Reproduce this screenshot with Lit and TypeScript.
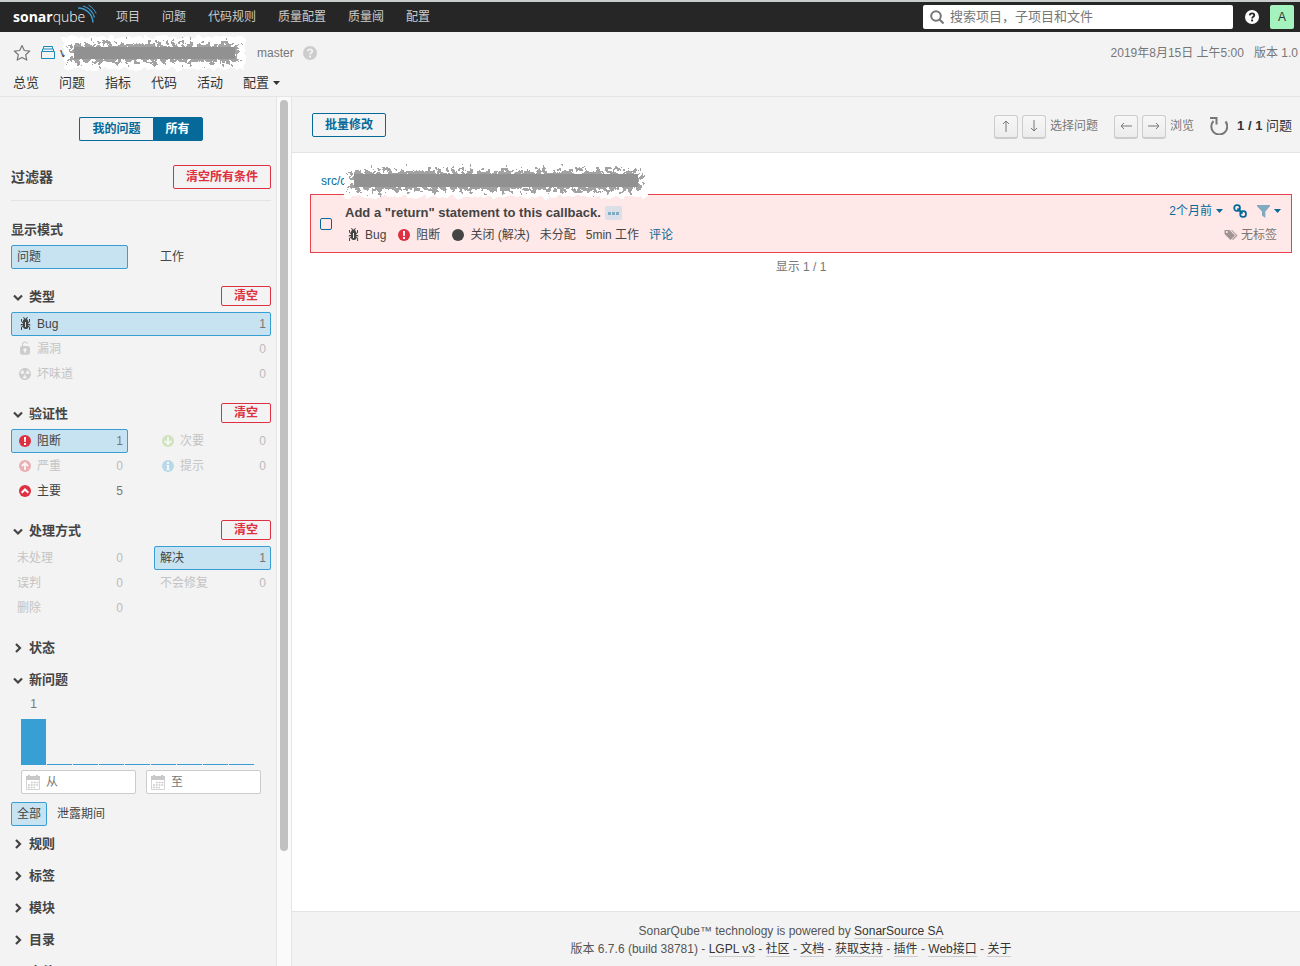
import { LitElement, html, svg, css, nothing, TemplateResult } from "lit";
import { customElement, property, state } from "lit/decorators.js";
import { classMap } from "lit/directives/class-map.js";
import { styleMap } from "lit/directives/style-map.js";

const shared = css`
  :host,
  :host * {
    box-sizing: border-box;
  }
  button,
  input {
    font: inherit;
    color: inherit;
    margin: 0;
  }
  button {
    border: 0;
    padding: 0;
    background: none;
    cursor: pointer;
  }
  a {
    color: inherit;
    text-decoration: none;
  }
  svg {
    display: block;
    flex: none;
  }
  .btn {
    height: 24px;
    padding: 0 12px;
    border: 1px solid #056a9a;
    border-radius: 2px;
    color: #056a9a;
    font-size: 12px;
    line-height: 22px;
    font-weight: 600;
    white-space: nowrap;
  }
  .btn.red {
    border-color: #de3040;
    color: #de3040;
  }
  .btn.small {
    height: 20px;
    line-height: 18px;
  }
`;

const icon16 = (body: TemplateResult, color = "#444") =>
  html`<svg width="16" height="16" viewBox="0 0 16 16" fill=${color} aria-hidden="true">${body}</svg>`;

const icons: Record<string, () => TemplateResult> = {
  bug: () =>
    icon16(svg`<path d="M11 9h1.3l.5.8.8-.5-.8-1.3H11v-.3l2-2.3V3h-1v2l-1 1.2V5c-.1-.8-.7-1.5-1.4-1.9L11 1.8l-.7-.7-1.8 1.6-1.8-1.6-.7.7 1.5 1.3C6.7 3.5 6.1 4.2 6 5v1.1L5 5V3H4v2.3l2 2.3V8H4.2l-.7 1.2.8.5.4-.7H6v.3l-2 1.9V14h1v-2.4l1-1C6 12 7.1 13 8.4 13h.8c.7 0 1.4-.3 1.8-.9.3-.4.3-.9.2-1.4l.9.9V14h1v-2.8l-2-1.9V9zm-2 2H8V6h1v5z"/>`),
  vulnerability: () =>
    icon16(svg`<path d="M10.8 5H6V3.9a2.28 2.28 0 0 1 2-2.5 2.22 2.22 0 0 1 1.8 1.2.48.48 0 0 0 .7.2.48.48 0 0 0 .2-.7A3 3 0 0 0 8 .4a3.34 3.34 0 0 0-3 3.5v1.2a2.16 2.16 0 0 0-2 2.1v4.4a2.22 2.22 0 0 0 2.2 2.2h5.6a2.22 2.22 0 0 0 2.2-2.2V7.2A2.22 2.22 0 0 0 10.8 5zm-2.2 5.5v1.2H7.4v-1.2a1.66 1.66 0 0 1-1.1-1.6A1.75 1.75 0 0 1 8 7.2a1.71 1.71 0 0 1 .6 3.3z"/>`),
  smell: () =>
    icon16(svg`<path d="M8 2C4.7 2 2 4.7 2 8s2.7 6 6 6 6-2.7 6-6-2.7-6-6-6zm-.5 5.5h.9v.9h-.9v-.9zm-3.8.2c-.1 0-.2-.1-.2-.2 0-.4.1-1.2.6-2S5.3 4.2 5.6 4c.2 0 .3 0 .3.1l1.3 2.3c0 .1 0 .2-.1.2-.1.2-.2.3-.3.5-.1.2-.2.4-.2.5 0 .1-.1.2-.2.2l-2.7-.1zM9.9 12c-.3.2-1.1.5-2 .5-.9 0-1.7-.3-2-.5-.1 0-.1-.2-.1-.3l1.3-2.3c0-.1.1-.1.2-.1.2.1.3.1.5.1s.4 0 .5-.1c.1 0 .2 0 .2.1l1.3 2.3c.2.2.2.3.1.3zm2.5-4.1L9.7 8c-.1 0-.2-.1-.2-.2 0-.2-.1-.4-.2-.5 0-.1-.2-.3-.3-.4-.1 0-.1-.1-.1-.2l1.3-2.3c.1-.1.2-.1.3-.1.3.2 1 .7 1.5 1.5s.6 1.6.6 2c0 0-.1.1-.2.1z"/>`),
  blocker: () =>
    icon16(svg`<circle cx="8" cy="8" r="6"/><path d="M7 4h2l-.2 5H7.2zM7 10h2v2H7z" fill="#fff"/>`, "#de3040"),
  critical: () =>
    icon16(svg`<circle cx="8" cy="8" r="6"/><path d="M8 12V5.2M4.8 8.2L8 5l3.2 3.2" fill="none" stroke="#fff" stroke-width="1.8"/>`, "#de3040"),
  major: () =>
    icon16(svg`<circle cx="8" cy="8" r="6"/><path d="M4.7 9.8L8 6.5l3.3 3.3" fill="none" stroke="#fff" stroke-width="2"/>`, "#de3040"),
  minor: () =>
    icon16(svg`<circle cx="8" cy="8" r="6"/><path d="M8 4v6.8M4.8 7.8L8 11l3.2-3.2" fill="none" stroke="#fff" stroke-width="1.8"/>`, "#8fc85a"),
  info: () =>
    icon16(svg`<circle cx="8" cy="8" r="6"/><path d="M7 4h2v2H7zM6.5 7H9v4h.7v1H6.4v-1H7V8h-.5z" fill="#fff"/>`, "#4cabd9"),
  closed: () => icon16(svg`<circle cx="8" cy="8" r="6"/>`),
  calendar: () => html`<svg width="14" height="15" viewBox="0 0 14 15" aria-hidden="true">
    <path d="M0 1h2V0h2v1h6V0h2v1h2v4H0z" fill="#c8c8c8" />
    <path d="M.5 5v9.5h13V5" fill="none" stroke="#d4d4d4" />
    <path d="M5 7.5h7.500M2 10h10.500M2 12.500h7" stroke="#c8c8c8" stroke-width="1.500" stroke-dasharray="1.800 1" />
  </svg>`,
};

const caret = (color: string) =>
  html`<svg width="7" height="4" viewBox="0 0 7 4" fill=${color} aria-hidden="true"><path d="M0 0h7L3.5 4z" /></svg>`;

const helpIcon = (size: number, fill: string, mark: string) =>
  html`<svg width=${size} height=${size} viewBox="0 0 14 14" aria-hidden="true">
    <circle cx="7" cy="7" r="7" fill=${fill} />
    <path d="M4.700 5.400C4.900 3.900 5.900 3.300 7 3.300c1.300 0 2.300.8 2.300 1.900C9.300 6.700 7.100 6.700 7.100 8.400" fill="none" stroke=${mark} stroke-width="1.800" />
    <path d="M6.100 9.500h2v1.900h-2z" fill=${mark} />
  </svg>`;

/* Spray-painted strip that hides a private name. */
@customElement("redaction-strip")
class RedactionStrip extends LitElement {
  @property({ type: Number }) width = 180;
  @property({ type: Number }) height = 36;

  static styles = css`
    :host {
      display: block;
    }
    svg {
      display: block;
      overflow: visible;
    }
  `;

  render() {
    const { width: w, height: h } = this;
    return html`<svg width=${w} height=${h} aria-hidden="true">
      <defs>
        <filter id="halo" x="-5%" y="-25%" width="110%" height="150%">
          <feTurbulence type="fractalNoise" baseFrequency=".15" numOctaves="2" seed="4" result="n" />
          <feDisplacementMap in="SourceGraphic" in2="n" scale="9" xChannelSelector="R" yChannelSelector="G" />
          <feGaussianBlur stdDeviation=".4" />
        </filter>
        <filter id="spray" x="-5%" y="-50%" width="110%" height="200%">
          <feTurbulence type="fractalNoise" baseFrequency=".22" numOctaves="3" seed="9" result="n" />
          <feDisplacementMap in="SourceGraphic" in2="n" scale="22" xChannelSelector="R" yChannelSelector="G" />
          <feGaussianBlur stdDeviation=".5" />
        </filter>
      </defs>
      <rect x="1" y="2" width=${w - 2} height=${h - 4} fill="#fff" filter="url(#halo)" />
      <rect x="9" y="9" width=${w - 17} height=${h - 18} fill="#a2a2a2" filter="url(#spray)" />
      <rect x="12" y="12" width=${w - 23} height=${h - 24} fill="#919191" />
    </svg>`;
  }
}

interface Item {
  label: string;
  count?: number;
  icon?: string;
  active?: boolean;
  off?: boolean;
}

@customElement("facet-box")
class FacetBox extends LitElement {
  @property() name = "";
  @property({ type: Boolean }) open = false;
  @property({ type: Boolean }) plain = false;
  @property({ type: Boolean }) clearable = false;
  @property({ type: Boolean }) tight = false;
  @property({ type: Number }) columns = 1;
  @property({ attribute: false }) items: Item[] = [];

  static styles = [
    shared,
    css`
      :host {
        display: block;
        padding-bottom: 12px;
      }
      :host([tight]) {
        padding-bottom: 7px;
      }
      .head {
        display: flex;
        align-items: center;
        justify-content: space-between;
        height: 20px;
      }
      .title {
        display: flex;
        align-items: center;
        gap: 4px;
        padding-top: 2px;
        font-size: 13px;
        line-height: 20px;
        font-weight: 600;
      }
      .list {
        display: grid;
        column-gap: 26px;
        row-gap: 1px;
        margin: 6px 0 5px;
      }
      .two {
        grid-template-columns: 1fr 1fr;
      }
      .item {
        display: flex;
        align-items: center;
        gap: 4px;
        height: 24px;
        padding: 0 4px 0 5px;
        border: 1px solid transparent;
        border-radius: 2px;
        font-size: 12px;
        line-height: 22px;
        text-align: left;
      }
      .item.active {
        background: #c7e2f0;
        border-color: #379fd3;
      }
      .item.off {
        color: #c4c4c4;
      }
      .off svg {
        opacity: 0.35;
      }
      .off svg[fill="#444"] {
        opacity: 0.22;
      }
      .count {
        margin-left: auto;
        color: #777;
      }
      .off .count {
        color: #bbb;
      }
    `,
  ];

  render() {
    const chevron = this.open ? "M3 5.500l4 4 4-4" : "M5 3l4 4-4 4";
    return html`
      <div class="head">
        ${this.plain
          ? html`<span class="title">${this.name}</span>`
          : html`<button class="title" aria-expanded=${this.open} @click=${() => (this.open = !this.open)}>
              <svg width="14" height="14" viewBox="0 0 14 14" aria-hidden="true">
                <path d=${chevron} fill="none" stroke="#444" stroke-width="2.200" />
              </svg>
              ${this.name}
            </button>`}
        ${this.clearable ? html`<button class="btn red small">清空</button>` : nothing}
      </div>
      ${this.open && this.items.length
        ? html`<div class=${classMap({ list: true, two: this.columns === 2 })}>
            ${this.items.map(
              (i) => html`<button class=${classMap({ item: true, active: !!i.active, off: !!i.off })}>
                ${i.icon ? icons[i.icon]() : nothing}
                <span>${i.label}</span>
                ${i.count !== undefined ? html`<span class="count">${i.count}</span>` : nothing}
              </button>`
            )}
          </div>`
        : nothing}
      ${this.open ? html`<slot></slot>` : nothing}
    `;
  }
}

const off = (label: string, icon?: string): Item => ({ label, icon, count: 0, off: true });

@customElement("app-root")
class AppRoot extends LitElement {
  @state() private mine = false;

  static styles = [
    shared,
    css`
      :host {
        display: flex;
        flex-direction: column;
        height: 100vh;
        background: #f3f3f3;
        color: #444;
        font: 12px/20px "Liberation Sans", "Noto Sans CJK SC", sans-serif;
      }
      .navbar {
        display: flex;
        align-items: center;
        height: 32px;
        flex: none;
        padding: 0 6px 0 13px;
        border-top: 2px solid #c9cdcd;
        background: #262626;
        color: #ccc;
      }
      .logo {
        position: relative;
        width: 103px;
        color: #fff;
        font: 300 14px/28px "Open Sans", sans-serif;
      }
      .logo b {
        font-weight: 700;
      }
      .logo svg {
        position: absolute;
        left: 64px;
        top: 1px;
      }
      .menu {
        display: flex;
        gap: 22px;
        flex: 1;
      }
      .search {
        display: flex;
        align-items: center;
        gap: 6px;
        width: 310px;
        height: 24px;
        padding: 0 7px;
        border-radius: 2px;
        background: #fff;
      }
      .search input {
        flex: 1;
        min-width: 0;
        border: 0;
        padding: 0;
        outline: none;
        font-size: 13px;
        color: #444;
        background: none;
      }
      input::placeholder {
        color: #777;
        opacity: 1;
      }
      .help {
        margin: 0 11px 0 12px;
      }
      .avatar {
        width: 24px;
        height: 24px;
        border-radius: 2px;
        background: #a4f3be;
        color: #333;
        font-size: 12px;
        line-height: 24px;
        text-align: center;
      }
      .context {
        flex: none;
        padding: 11px 2px 3px 13px;
        border-bottom: 1px solid #e6e6e6;
      }
      .project {
        display: flex;
        align-items: center;
        height: 20px;
        color: #777;
      }
      .project .kind {
        margin: 0 4px 0 9px;
      }
      .name {
        position: relative;
        width: 197px;
        color: #444;
        font-size: 13px;
      }
      .name redaction-strip {
        position: absolute;
        left: 2px;
        top: -8px;
      }
      .branch {
        margin-right: 9px;
      }
      .when {
        margin-left: auto;
      }
      .version {
        margin-left: 10px;
      }
      .tabs {
        display: flex;
        gap: 20px;
        margin-top: 10px;
        font-size: 13px;
        line-height: 20px;
        color: #333;
      }
      .tabs a {
        display: flex;
        align-items: center;
        gap: 4px;
      }
      .body {
        display: flex;
        flex: 1;
        min-height: 0;
      }
      .side {
        width: 276px;
        flex: none;
        overflow-y: auto;
        scrollbar-width: none;
        padding: 20px 5px 12px 11px;
      }
      .track {
        width: 16px;
        flex: none;
        padding: 3px;
        border: 1px solid #e6e6e6;
        border-width: 0 1px;
        background: #fafafa;
      }
      .thumb {
        width: 8px;
        height: 87%;
        border-radius: 4px;
        background: #c1c1c1;
      }
      .toggle {
        display: flex;
        justify-content: center;
      }
      .toggle .btn:first-child {
        border-radius: 2px 0 0 2px;
        border-right: 0;
      }
      .toggle .btn:last-child {
        border-radius: 0 2px 2px 0;
      }
      .toggle .on {
        background: #056a9a;
        color: #fff;
      }
      .filters {
        display: flex;
        align-items: center;
        justify-content: space-between;
        margin: 24px 0 18px;
        padding-bottom: 11px;
        border-bottom: 1px solid #e3e3e3;
      }
      h2 {
        margin: 0;
        font-size: 14px;
        line-height: 24px;
        font-weight: 600;
      }
      .chart {
        display: flex;
        align-items: flex-end;
        gap: 1px;
        margin: 5px 10px;
      }
      .col {
        width: 25px;
        text-align: center;
        color: #777;
      }
      .bar {
        margin-top: 5px;
        background: #379fd3;
      }
      .dates {
        display: grid;
        grid-template-columns: 1fr 1fr;
        gap: 10px;
        margin: 0 10px;
      }
      .date {
        display: flex;
        align-items: center;
        gap: 6px;
        height: 24px;
        padding: 0 4px;
        border: 1px solid #ccc;
        border-radius: 2px;
        background: #fff;
      }
      .date input {
        min-width: 0;
        width: 100%;
        border: 0;
        padding: 0;
        outline: none;
      }
      .chips {
        display: flex;
        gap: 4px;
        margin-top: 8px;
      }
      .chip {
        height: 24px;
        padding: 0 5px;
        border: 1px solid transparent;
        border-radius: 2px;
        line-height: 22px;
      }
      .chip.on {
        background: #c7e2f0;
        border-color: #379fd3;
      }
      .main {
        display: flex;
        flex-direction: column;
        flex: 1;
        min-width: 0;
        overflow-y: auto;
        background: #fff;
      }
      .bar-top {
        display: flex;
        align-items: center;
        justify-content: space-between;
        height: 56px;
        flex: none;
        padding: 0 8px 0 20px;
        border-bottom: 1px solid #e3e3e3;
        background: #f3f3f3;
      }
      .tools {
        display: flex;
        align-items: center;
        gap: 4px;
        padding-top: 2px;
        color: #777;
      }
      .key {
        display: grid;
        place-items: center;
        width: 24px;
        height: 24px;
        margin-top: 2px;
        border: 1px solid #ccc;
        border-bottom-width: 2px;
        border-radius: 3px;
        background: linear-gradient(#f7f7f7, #ececec);
      }
      .label {
        margin-right: 12px;
      }
      .total {
        margin-left: 5px;
        font-size: 13px;
        color: #333;
      }
      .issues {
        padding: 18px 8px 0 18px;
      }
      .path {
        position: relative;
        padding-left: 11px;
        height: 23px;
        line-height: 20px;
        color: #056a9a;
      }
      .path redaction-strip {
        position: absolute;
        left: 32px;
        top: -9px;
      }
      .issue {
        display: flex;
        height: 59px;
        padding: 7px 8px 7px 9px;
        border: 1px solid #e6414c;
        background: #ffe9e8;
      }
      .check {
        appearance: none;
        align-self: center;
        width: 12px;
        height: 12px;
        margin-right: 13px;
        border: 1px solid #056a9a;
        border-radius: 2px;
        background: transparent;
      }
      .text {
        flex: 1;
        min-width: 0;
      }
      .title,
      .meta,
      .when-line,
      .tags {
        display: flex;
        align-items: center;
        height: 22px;
      }
      .title {
        gap: 4px;
        font-size: 13px;
        font-weight: 700;
      }
      .more {
        display: flex;
        align-items: center;
        justify-content: center;
        gap: 1px;
        width: 17px;
        height: 14px;
        border-radius: 2px;
        background: #dbdfe7;
      }
      .more i {
        width: 3px;
        height: 3px;
        background: #7fabc4;
      }
      .meta {
        gap: 10px;
      }
      .meta button,
      .link {
        display: flex;
        align-items: center;
        gap: 4px;
      }
      .blue {
        color: #056a9a;
      }
      .right {
        display: flex;
        flex-direction: column;
        align-items: flex-end;
      }
      .when-line {
        gap: 10px;
        color: #056a9a;
        margin-top: -1px;
        padding-right: 2px;
      }
      .tags {
        gap: 3px;
        margin-top: 3px;
        padding-right: 6px;
        color: #777;
      }
      .shown {
        margin-top: 4px;
        text-align: center;
        color: #777;
      }
      footer {
        margin-top: auto;
        padding: 10px 10px 8px 0;
        border-top: 1px solid #e3e3e3;
        background: #f3f3f3;
        text-align: center;
        line-height: 18px;
        color: #555;
      }
      footer a {
        color: #333;
        border-bottom: 1px solid #ccc;
      }
    `,
  ];

  render() {
    const links = ["LGPL v3", "社区", "文档", "获取支持", "插件", "Web接口", "关于"];
    return html`
      <header class="navbar">
        <a class="logo" href="#" aria-label="sonarqube">
          <b>sonar</b>qube
          <svg width="20" height="20" viewBox="0 0 20 20" fill="none" stroke="#3f9fd0" aria-hidden="true">
            <path d="M1 4C9 4 15.500 10 16 18.500" stroke-width="1.500" />
            <path d="M6 2C11.500 3.500 16 8 17.500 13.500" stroke-width="1.200" />
            <path d="M11.500 1C15 3 18 6.500 19.200 9.500" stroke-width="1" />
          </svg>
        </a>
        <nav class="menu">
          ${["项目", "问题", "代码规则", "质量配置", "质量阈", "配置"].map((t) => html`<a href="#">${t}</a>`)}
        </nav>
        <label class="search">
          <svg width="14" height="14" viewBox="0 0 14 14" fill="none" stroke="#777" stroke-width="2" aria-hidden="true">
            <circle cx="6" cy="6" r="4.800" />
            <path d="M9.500 9.500l4 4" />
          </svg>
          <input type="search" aria-label="搜索" placeholder="搜索项目，子项目和文件" />
        </label>
        <a class="help" href="#" aria-label="帮助">${helpIcon(14, "#fff", "#262626")}</a>
        <button class="avatar">A</button>
      </header>

      <div class="context">
        <div class="project">
          <svg width="18" height="18" viewBox="0 0 18 18" aria-hidden="true">
            <path d="M9 1.500l2.300 5 5.400.6-4 3.700 1.100 5.300L9 13.400l-4.800 2.700 1.100-5.300-4-3.700 5.400-.6z" fill="none" stroke="#777" stroke-width="1.200" stroke-linejoin="round" />
          </svg>
          <svg class="kind" width="16" height="16" viewBox="0 0 16 16" aria-hidden="true">
            <path d="M1.500 6.500h13v7h-13zM2.500 6.500v-2.500h11v2.500M3.500 4V1.500h9V4" fill="none" stroke="#1a8bbd" stroke-width="1" />
          </svg>
          <span class="name">v<redaction-strip .width=${184} .height=${36}></redaction-strip></span>
          <span class="branch">master</span>
          ${helpIcon(14, "#ccc", "#f3f3f3")}
          <span class="when">2019年8月15日 上午5:00</span>
          <span class="version">版本 1.0</span>
        </div>
        <nav class="tabs">
          ${["总览", "问题", "指标", "代码", "活动"].map((t) => html`<a href="#">${t}</a>`)}
          <a href="#">配置${caret("#333")}</a>
        </nav>
      </div>

      <div class="body">
        <aside class="side">
          <div class="toggle">
            <button class=${classMap({ btn: true, on: this.mine })} @click=${() => (this.mine = true)}>我的问题</button>
            <button class=${classMap({ btn: true, on: !this.mine })} @click=${() => (this.mine = false)}>所有</button>
          </div>
          <div class="filters">
            <h2>过滤器</h2>
            <button class="btn red">清空所有条件</button>
          </div>
          <facet-box name="显示模式" plain open columns="2" .items=${[{ label: "问题", active: true }, { label: "工作" }]}></facet-box>
          <facet-box
            name="类型"
            open
            clearable
            .items=${[{ label: "Bug", icon: "bug", count: 1, active: true }, off("漏洞", "vulnerability"), off("坏味道", "smell")]}
          ></facet-box>
          <facet-box
            name="验证性"
            open
            clearable
            columns="2"
            .items=${[
              { label: "阻断", icon: "blocker", count: 1, active: true },
              off("次要", "minor"),
              off("严重", "critical"),
              off("提示", "info"),
              { label: "主要", icon: "major", count: 5 },
            ]}
          ></facet-box>
          <facet-box
            name="处理方式"
            open
            clearable
            columns="2"
            .items=${[off("未处理"), { label: "解决", count: 1, active: true }, off("误判"), off("不会修复"), off("删除")]}
          ></facet-box>
          <facet-box name="状态"></facet-box>
          <facet-box name="新问题" open tight>
            <div class="chart">
              ${[1, 0, 0, 0, 0, 0, 0, 0, 0].map(
                (n) => html`<div class="col">
                  ${n || nothing}
                  <div class="bar" style=${styleMap({ height: `${n * 45 + 1}px` })}></div>
                </div>`
              )}
            </div>
            <div class="dates">
              ${["从", "至"].map((t) => html`<label class="date">${icons.calendar()}<input aria-label=${t} placeholder=${t} /></label>`)}
            </div>
            <div class="chips">
              <button class="chip on">全部</button>
              <button class="chip">泄露期间</button>
            </div>
          </facet-box>
          ${["规则", "标签", "模块", "目录", "文件"].map((n) => html`<facet-box name=${n}></facet-box>`)}
        </aside>
        <div class="track"><div class="thumb"></div></div>

        <main class="main">
          <div class="bar-top">
            <button class="btn">批量修改</button>
            <div class="tools">
              ${this.key("M6 13V2M3 5l3-3 3 3")} ${this.key("M6 1v11M3 9l3 3 3-3")}
              <span class="label">选择问题</span>
              ${this.key("M12 7H1M4 4L1 7l3 3")} ${this.key("M0 7h11M8 4l3 3-3 3")}
              <span class="label">浏览</span>
              <button aria-label="刷新">
                <svg width="18" height="18" viewBox="0 0 18 18" aria-hidden="true">
                  <path d="M15.500 4.500A8 8 0 1 1 3.500 4" fill="none" stroke="#777" stroke-width="2" />
                  <path d="M0 0h7.500v7.500h-2V2H0z" fill="#777" />
                </svg>
              </button>
              <span class="total"><b>1 / 1</b> 问题</span>
            </div>
          </div>

          <section class="issues">
            <div class="path"><a href="#">src/c</a><redaction-strip .width=${307} .height=${37}></redaction-strip></div>
            <article class="issue">
              <input class="check" type="checkbox" aria-label="选择问题" />
              <div class="text">
                <div class="title">
                  Add a "return" statement to this callback.
                  <button class="more" aria-label="规则"><i></i><i></i><i></i></button>
                </div>
                <div class="meta">
                  <button>${icons.bug()}Bug</button>
                  <button>${icons.blocker()}阻断</button>
                  <button>${icons.closed()}关闭 (解决)</button>
                  <button>未分配</button>
                  <span>5min 工作</span>
                  <button class="blue">评论</button>
                </div>
              </div>
              <div class="right">
                <div class="when-line">
                  <button class="link">2个月前 ${caret("#056a9a")}</button>
                  <a href="#" aria-label="链接">
                    <svg width="14" height="14" viewBox="0 0 14 14" fill="none" stroke="#056a9a" stroke-width="1.800" aria-hidden="true">
                      <rect x="1.300" y="1.200" width="5.600" height="5.600" rx="2.400" />
                      <rect x="7.300" y="7.200" width="5.600" height="5.600" rx="2.400" />
                      <path d="M4.500 4.500l5 5" />
                    </svg>
                  </a>
                  <button class="link" aria-label="筛选">
                    <svg width="13" height="13" viewBox="0 0 13 13" fill="#82a9c0" aria-hidden="true"><path d="M0 0h13v1.200L8.300 6.500V13L5 10.500v-4L0 1.200z" /></svg>
                    ${caret("#056a9a")}
                  </button>
                </div>
                <div class="tags">
                  <svg width="14" height="12" viewBox="0 0 14 12" fill="#a09492" aria-hidden="true">
                    <path fill-rule="evenodd" d="M1 1h4.500L11 6.500 6.500 11 0.500 5V1zM2.800 2a1 1 0 1 0 0 2 1 1 0 0 0 0-2z" />
                    <path d="M7 1h1l5.500 5.500L9 11l-.900-.700L12 6.500z" />
                  </svg>
                  无标签
                </div>
              </div>
            </article>
            <div class="shown">显示 1 / 1</div>
          </section>

          <footer>
            <div>SonarQube™ technology is powered by <a href="#">SonarSource SA</a></div>
            <div>版本 6.7.6 (build 38781)${links.map((l) => html` - <a href="#">${l}</a>`)}</div>
          </footer>
        </main>
      </div>
    `;
  }

  private key(d: string) {
    return html`<span class="key">
      <svg width="12" height="14" viewBox="0 0 12 14" fill="none" stroke="#777" aria-hidden="true"><path d=${d} /></svg>
    </span>`;
  }
}
